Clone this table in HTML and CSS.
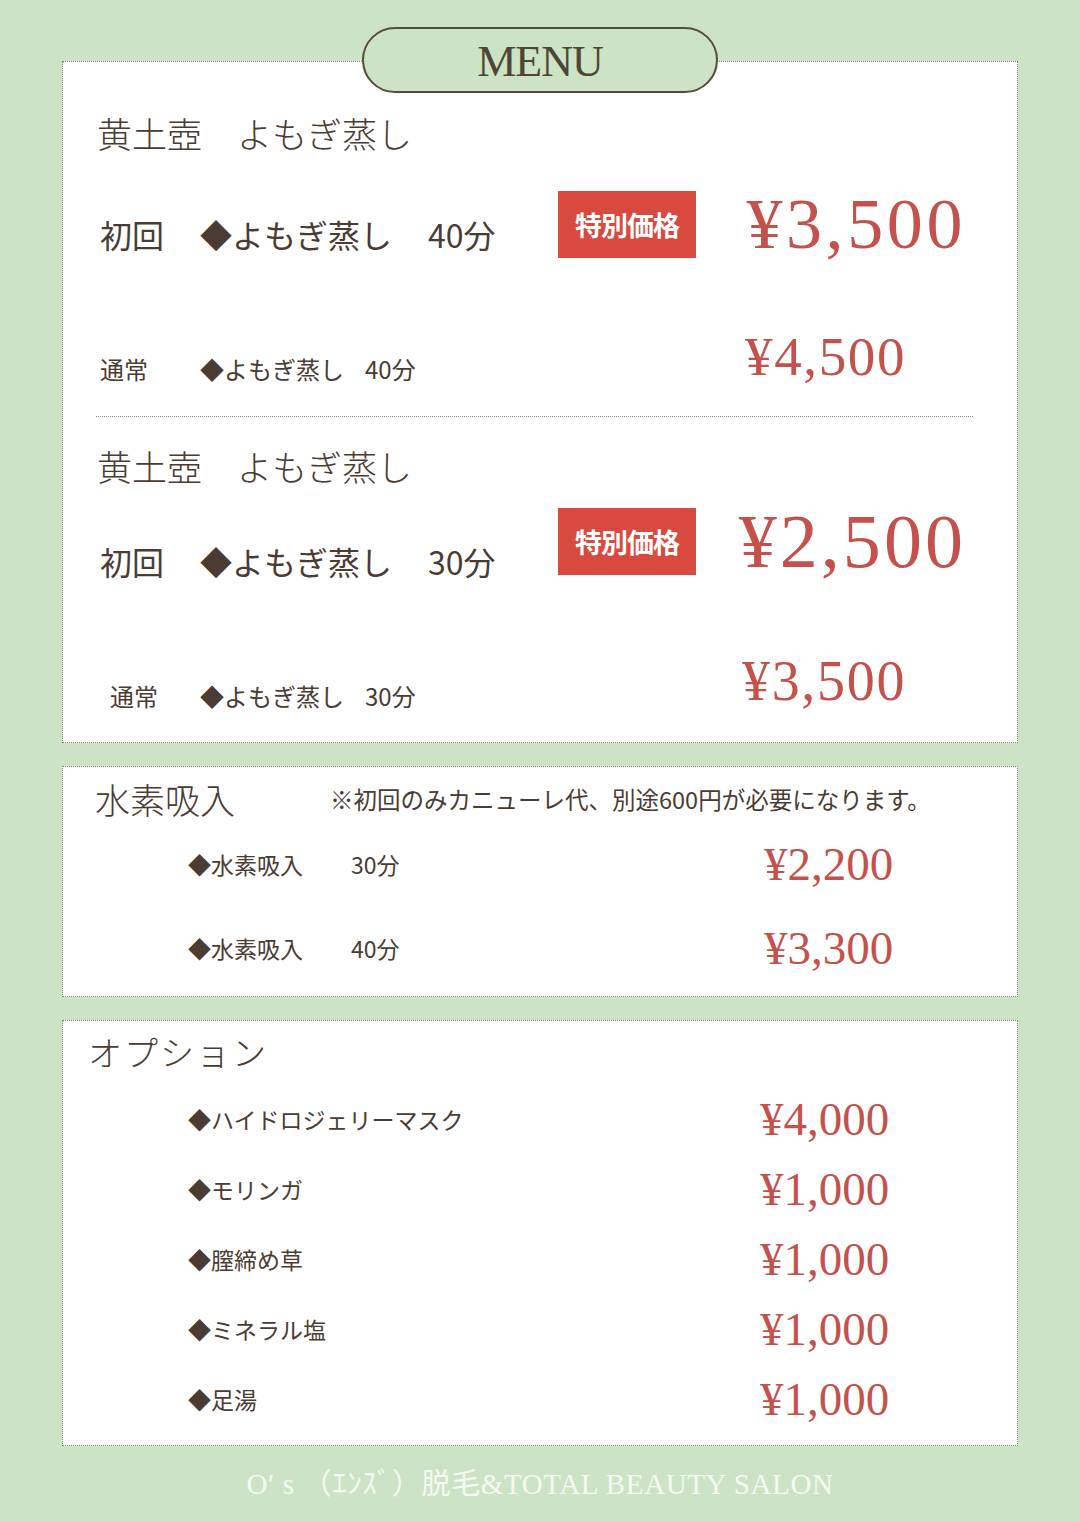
FILE: index.html
```html
<!DOCTYPE html>
<html lang="ja">
<head>
<meta charset="utf-8">
<title>MENU</title>
<link rel="stylesheet" href="styles.css">
</head>
<body>
<div class="page">
  <div class="pill">MENU</div>

  <section class="panel panel-main">
    <h2 class="title">黄土壺　よもぎ蒸し</h2>
    <div class="row-first">
      <div class="label big"><span class="k">初回</span><span class="m">◆よもぎ蒸し</span><span>40分</span></div>
      <div class="badge">特別価格</div>
      <div class="price p-xl">¥3,500</div>
    </div>
    <div class="row-normal">
      <div class="label small"><span class="k">通常</span><span class="m">◆よもぎ蒸し</span><span>40分</span></div>
      <div class="price p-l">¥4,500</div>
    </div>

    <hr class="sep">

    <h2 class="title title-b">黄土壺　よもぎ蒸し</h2>
    <div class="row-first row-first-b">
      <div class="label big"><span class="k">初回</span><span class="m">◆よもぎ蒸し</span><span>30分</span></div>
      <div class="badge">特別価格</div>
      <div class="price p-xl p-xxl">¥2,500</div>
    </div>
    <div class="row-normal row-normal-b">
      <div class="label small"><span class="k k-shift">通常</span><span class="m">◆よもぎ蒸し</span><span>30分</span></div>
      <div class="price p-l">¥3,500</div>
    </div>
  </section>

  <section class="panel panel-h2">
    <div class="title-row">
      <h2 class="title title-inline">水素吸入</h2>
      <p class="note">※初回のみカニューレ代、別途600円が必要になります。</p>
    </div>
    <div class="item-row">
      <div class="label mid"><span class="m2">◆水素吸入</span><span>30分</span></div>
      <div class="price p-m">¥2,200</div>
    </div>
    <div class="item-row">
      <div class="label mid"><span class="m2">◆水素吸入</span><span>40分</span></div>
      <div class="price p-m">¥3,300</div>
    </div>
  </section>

  <section class="panel panel-opt">
    <h2 class="title title-opt">オプション</h2>
    <div class="item-row opt-row">
      <div class="label mid">◆ハイドロジェリーマスク</div>
      <div class="price p-m">¥4,000</div>
    </div>
    <div class="item-row opt-row">
      <div class="label mid">◆モリンガ</div>
      <div class="price p-m">¥1,000</div>
    </div>
    <div class="item-row opt-row">
      <div class="label mid">◆膣締め草</div>
      <div class="price p-m">¥1,000</div>
    </div>
    <div class="item-row opt-row">
      <div class="label mid">◆ミネラル塩</div>
      <div class="price p-m">¥1,000</div>
    </div>
    <div class="item-row opt-row">
      <div class="label mid">◆足湯</div>
      <div class="price p-m">¥1,000</div>
    </div>
  </section>

  <footer class="footer">O′ s （ｴﾝｽﾞ）脱毛&amp;TOTAL BEAUTY SALON</footer>
</div>
</body>
</html>
```

FILE: styles.css
```css
html, body {
  margin: 0;
  padding: 0;
}
body {
  background: #cde3c5;
  font-family: "Noto Sans CJK JP", "Noto Sans", sans-serif;
  color: #4a3c33;
}
.page {
  width: 1080px;
  height: 1522px;
  padding-top: 27px;
  box-sizing: border-box;
}
.pill {
  position: relative;
  z-index: 1;
  width: 356px;
  height: 66px;
  box-sizing: border-box;
  margin: 0 auto -32px;
  border: 2px solid #574c3c;
  border-radius: 33px;
  background: #cde3c5;
  display: flex;
  align-items: center;
  justify-content: center;
  padding-top: 2px;
  font-family: "Liberation Serif", serif;
  font-size: 44px;
  letter-spacing: -1px;
  color: #4d4535;
}
.panel {
  margin: 0 62px;
  background: #fff;
  border: 1px dotted #7f7f77;
}
.panel-main {
  padding: 53px 0 33px;
}
.title {
  margin: 0 0 0 34px;
  font-size: 35px;
  line-height: 35px;
  font-weight: 300;
  white-space: nowrap;
}
.title-b {
  margin-top: 31px;
}
.label {
  display: flex;
  white-space: nowrap;
}
.label .k {
  width: 100px;
}
.label .k-shift {
  width: 90px;
  margin-left: 10px;
}
.row-first {
  display: grid;
  grid-template-columns: 458px 138px 1fr;
  align-items: center;
  margin: 38px 0 0 37px;
}
.row-first-b {
  margin-top: 20px;
}
.label.big {
  font-size: 32px;
  line-height: 32px;
  padding-top: 20px;
}
.row-first-b .label.big {
  padding-top: 40px;
}
.label.big .m {
  width: 228px;
}
.badge {
  height: 67px;
  background: #d84a40;
  color: #fff;
  font-weight: 700;
  font-size: 27px;
  letter-spacing: -1px;
  display: flex;
  align-items: center;
  justify-content: center;
}
.price {
  font-family: "Liberation Serif", serif;
  color: #c4514c;
  white-space: nowrap;
}
.p-xl {
  font-size: 72px;
  line-height: 72px;
  letter-spacing: 0.05em;
  text-align: right;
  padding-right: 51px;
}
.p-xxl {
  font-size: 76px;
  line-height: 76px;
  letter-spacing: 0.04em;
}
.row-normal {
  display: grid;
  grid-template-columns: 645px 1fr;
  align-items: start;
  margin: 69px 0 0 37px;
}
.row-normal-b {
  margin-top: 74px;
  grid-template-columns: 642px 1fr;
}
.label.small {
  font-size: 24px;
  line-height: 24px;
  margin-top: 28px;
}
.row-normal-b .label.small {
  margin-top: 31px;
}
.label.small .m {
  width: 165px;
}
.p-l {
  font-size: 55px;
  line-height: 55px;
  letter-spacing: 0.03em;
}
.row-normal-b .p-l {
  font-size: 56px;
  line-height: 56px;
}
.sep {
  margin: 32px 44px 0 33px;
  border: 0;
  border-top: 1px dotted #888;
  height: 0;
}
.panel-h2 {
  margin-top: 23px;
  padding: 14px 0 24px;
}
.title-row {
  display: flex;
  align-items: flex-end;
  margin-left: 32px;
}
.title-inline {
  margin: 0;
}
.note {
  margin: 0 0 5px 95px;
  font-size: 23.5px;
  line-height: 24px;
  white-space: nowrap;
}
.item-row {
  display: grid;
  grid-template-columns: 576px 1fr;
  align-items: center;
  margin: 25px 0 0 125px;
}
.item-row + .item-row {
  margin-top: 37px;
}
.label.mid {
  font-size: 23px;
  line-height: 23px;
}
.label.mid .m2 {
  width: 163px;
}
.p-m {
  font-size: 47px;
  line-height: 47px;
}
.panel-opt {
  margin-top: 23px;
  padding: 14px 0 22px;
}
.title-opt {
  margin-left: 25px;
  font-size: 34px;
  line-height: 34px;
  letter-spacing: 2px;
}
.opt-row {
  grid-template-columns: 572px 1fr;
  margin-top: 27px;
}
.opt-row + .opt-row {
  margin-top: 23px;
}
.footer {
  margin-top: 23px;
  text-align: center;
  font-family: "Liberation Serif", "Noto Sans CJK JP", serif;
  font-size: 29px;
  line-height: 30px;
  color: #f6f9f3;
  letter-spacing: 0.6px;
  white-space: nowrap;
}
```
